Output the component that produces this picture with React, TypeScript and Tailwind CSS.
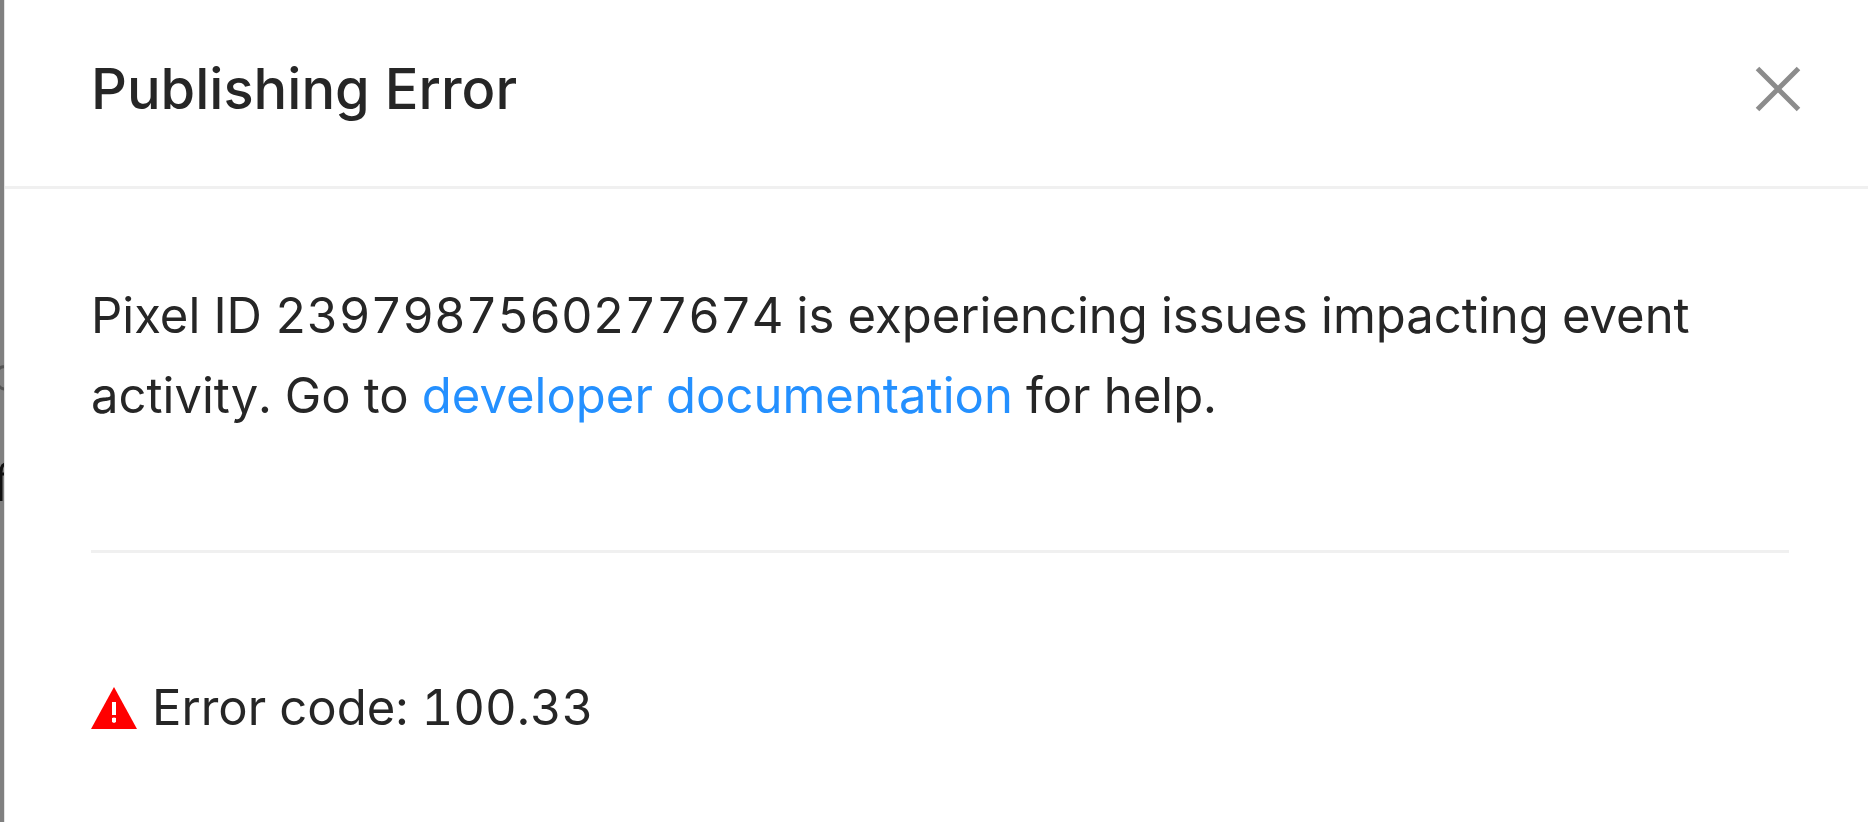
export default function App() {
  return (
    <div className="flex min-h-screen bg-white font-['Inter','Liberation_Sans',sans-serif] text-[#262626] tabular-nums">
      <div
        aria-hidden="true"
        className="relative w-[5px] shrink-0 overflow-hidden border-r border-[#e4e4e4] bg-[#808080]"
      >
        <svg className="absolute inset-x-0 top-[364px]" width="4" height="140" fill="none">
          <path d="M-1 5Q1 2 5 3M-1 22Q1 25 5 25" stroke="#555" strokeWidth="3" />
          <path d="M1 137V108Q1 101 5 100M1 110H5" stroke="#111" strokeWidth="3" />
        </svg>
      </div>
      <section role="dialog" aria-labelledby="dialog-title" className="min-w-0 flex-1">
        <header className="flex items-center justify-between border-b-3 border-[#f0f0f0] pt-12 pr-[63px] pb-14 pl-[86px]">
          <h1 id="dialog-title" className="text-[56px] leading-[82px] font-medium">
            Publishing Error
          </h1>
          <button type="button" aria-label="Close" className="cursor-pointer p-1">
            <svg width="46" height="46" viewBox="0 0 46 46" fill="none" className="block">
              <path d="M2.5 2.5L43.5 43.5M43.5 2.5L2.5 43.5" stroke="#8c8c8c" strokeWidth="5" />
            </svg>
          </button>
        </header>
        <div className="pt-[87px] pr-[79px] pl-[86px] text-[49px] leading-[80px]">
          <p className="pb-[114px]">
            Pixel ID 2397987560277674 is experiencing issues impacting event activity. Go to{" "}
            <a href="#documentation" className="text-[#2490ff]">
              developer documentation
            </a>{" "}
            for help.
          </p>
          <hr className="border-t-3 border-[#f0f0f0]" />
          <p className="flex items-center gap-[15px] pt-[115px]">
            <svg width="46" height="42" viewBox="0 0 46 42" className="shrink-0">
              <path d="M23 0L46 42H0Z" fill="#f00" />
              <path d="M21 15H25V28H21ZM21 31L23 30.5L25 31V35L23 36L21 35Z" fill="#fff" />
            </svg>
            <span>Error code: 100.33</span>
          </p>
        </div>
      </section>
    </div>
  );
}
